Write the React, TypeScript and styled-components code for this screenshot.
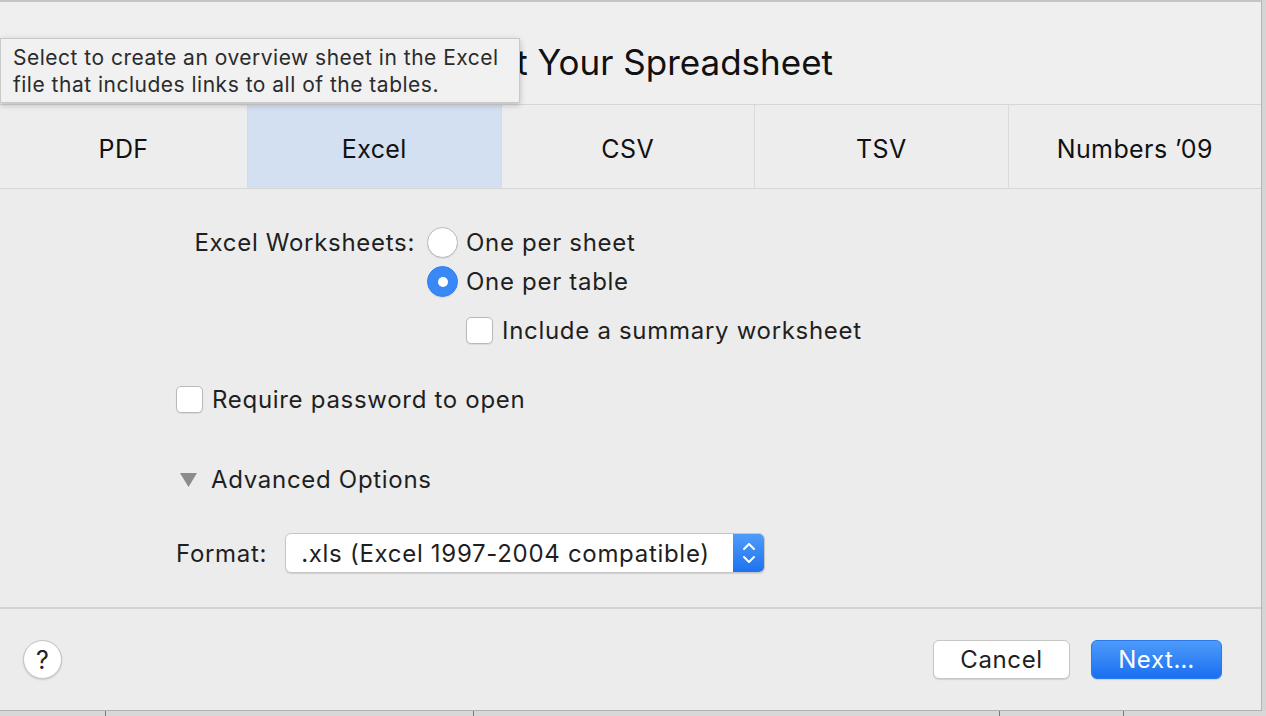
import React from "react";
import styled, { createGlobalStyle } from "styled-components";

const GlobalStyle = createGlobalStyle`
    html, body {
        margin: 0;
        padding: 0;
        background: #d5d5d5;
        font-family: Inter, "Liberation Sans", Arial, sans-serif;
        color: #1f1f1f;
        overflow: hidden;
    }
`;

const Page = styled.div`
    width: 1266px;
    height: 716px;
    display: flex;
    flex-direction: column;
    position: relative;
`;

const Sheet = styled.div`
    width: 1261px;
    height: 708px;
    background: #ececec;
    border-top: 2px solid #c4c4c4;
    border-right: 1px solid #b4b4b4;
    border-bottom: 1px solid #b0b0b0;
    display: flex;
    flex-direction: column;
`;

const TitleBar = styled.div`
    height: 102px;
    box-sizing: border-box;
    padding: 40px 8px 0 0;
    background: #efefef;
    text-align: center;
    font-size: 35px;
    line-height: 40px;
    color: #111;
`;

const TabBar = styled.div`
    display: flex;
    height: 83px;
    border-top: 1px solid #d6d6d6;
    border-bottom: 1px solid #d6d6d6;
`;

const Tab = styled.div<{ $active?: boolean }>`
    flex: 1;
    display: flex;
    align-items: center;
    justify-content: center;
    padding-top: 5px;
    font-size: 25px;
    letter-spacing: 0.4px;
    color: #111;
    background: ${(p) => (p.$active ? "#d3e0f1" : "#ededed")};
    &:first-child {
        flex: 0 0 247px;
    }
    & + & {
        border-left: 1px solid #dadada;
    }
`;

const Content = styled.div`
    flex: 1;
    padding: 34px 0 0 176px;
    display: flex;
    flex-direction: column;
    align-items: flex-start;
    font-size: 24px;
    letter-spacing: 0.7px;
`;

const FieldRow = styled.div`
    display: flex;
    align-items: flex-start;
`;

const FieldLabel = styled.div`
    width: 240px;
    padding-right: 12px;
    text-align: right;
    height: 39px;
    line-height: 39px;
    margin-left: -1px;
`;

const Options = styled.div`
    display: flex;
    flex-direction: column;
`;

const Option = styled.label<{ $indent?: number; $top?: number }>`
    display: flex;
    align-items: center;
    gap: 8px;
    height: 39px;
    margin-left: ${(p) => p.$indent || 0}px;
    margin-top: ${(p) => p.$top || 0}px;
    white-space: nowrap;
`;

const Radio = styled.span<{ $checked?: boolean }>`
    width: 31px;
    height: 31px;
    box-sizing: border-box;
    border-radius: 50%;
    display: flex;
    align-items: center;
    justify-content: center;
    background: ${(p) => (p.$checked ? "#3a88f6" : "#fff")};
    border: 1px solid ${(p) => (p.$checked ? "#2f7ff0" : "#b9b9b9")};
    box-shadow: 0 1px 1px rgba(0, 0, 0, 0.08);
    &::after {
        content: "";
        display: ${(p) => (p.$checked ? "block" : "none")};
        width: 10px;
        height: 10px;
        border-radius: 50%;
        background: #fff;
    }
`;

const Checkbox = styled.span`
    width: 27px;
    height: 27px;
    box-sizing: border-box;
    border-radius: 5px;
    background: #fff;
    border: 1px solid #b9b9b9;
    box-shadow: 0 1px 1px rgba(0, 0, 0, 0.08);
    margin-right: 1px;
`;

const Disclosure = styled.div`
    display: flex;
    align-items: center;
    gap: 14px;
    height: 39px;
    margin-top: 41px;
    padding-left: 4px;
    svg {
        display: block;
    }
`;

const FormatRow = styled.div`
    display: flex;
    align-items: center;
    gap: 18px;
    margin-top: 34px;
`;

const Popup = styled.div`
    width: 480px;
    height: 40px;
    box-sizing: border-box;
    display: flex;
    align-items: stretch;
    background: #fff;
    border: 1px solid #c6c6c6;
    border-radius: 6px;
    box-shadow: 0 1px 1px rgba(0, 0, 0, 0.12);
    overflow: hidden;
`;

const PopupText = styled.div`
    flex: 1;
    display: flex;
    align-items: center;
    padding-left: 15px;
    white-space: nowrap;
`;

const Stepper = styled.div`
    width: 31px;
    display: flex;
    align-items: center;
    justify-content: center;
    background: linear-gradient(#4f9cfa, #1e72ef);
`;

const Footer = styled.div`
    height: 101px;
    border-top: 2px solid #d3d3d3;
    display: flex;
    align-items: center;
    padding: 0 39px 0 23px;
`;

const HelpButton = styled.div`
    width: 39px;
    height: 39px;
    box-sizing: border-box;
    border-radius: 50%;
    background: #fff;
    border: 1px solid #c2c2c2;
    box-shadow: 0 1px 2px rgba(0, 0, 0, 0.15);
    display: flex;
    align-items: center;
    justify-content: center;
    font-size: 25px;
    color: #222;
`;

const Spacer = styled.div`
    flex: 1;
`;

const Button = styled.div<{ $primary?: boolean; $width: number }>`
    width: ${(p) => p.$width}px;
    height: 39px;
    box-sizing: border-box;
    border-radius: 6px;
    display: flex;
    align-items: center;
    justify-content: center;
    font-size: 24px;
    letter-spacing: 0.6px;
    color: ${(p) => (p.$primary ? "#fff" : "#1f1f1f")};
    background: ${(p) => (p.$primary ? "linear-gradient(#4e9bfb, #1a6ff0)" : "#fff")};
    border: 1px solid ${(p) => (p.$primary ? "#2a79ef" : "#c6c6c6")};
    box-shadow: 0 1px 1px rgba(0, 0, 0, 0.12);
    & + & {
        margin-left: 21px;
    }
`;

const BehindStrip = styled.div`
    flex: 1;
    display: flex;
    background: #d8d8d8;
`;

const BehindCell = styled.div<{ $w: number }>`
    width: ${(p) => p.$w}px;
    border-right: 1px solid #7a7a7a;
`;

const Tooltip = styled.div`
    position: absolute;
    left: 0;
    top: 38px;
    width: 520px;
    height: 65px;
    box-sizing: border-box;
    padding: 5px 0 0 12px;
    background: #f1f1f1;
    border: 1px solid #c9c9c9;
    box-shadow: 0 2px 6px rgba(0, 0, 0, 0.22);
    font-size: 21px;
    letter-spacing: 0.5px;
    line-height: 27px;
    color: #2b2b2b;
    white-space: nowrap;
`;

const tabs = ["PDF", "Excel", "CSV", "TSV", "Numbers ’09"];

export default function App() {
    return (
        <Page>
            <GlobalStyle />
            <Sheet>
                <TitleBar>Export Your Spreadsheet</TitleBar>
                <TabBar>
                    {tabs.map((t) => (
                        <Tab key={t} $active={t === "Excel"}>
                            {t}
                        </Tab>
                    ))}
                </TabBar>
                <Content>
                    <FieldRow>
                        <FieldLabel>Excel Worksheets:</FieldLabel>
                        <Options>
                            <Option>
                                <Radio />
                                One per sheet
                            </Option>
                            <Option>
                                <Radio $checked />
                                One per table
                            </Option>
                            <Option $indent={39} $top={10}>
                                <Checkbox />
                                Include a summary worksheet
                            </Option>
                        </Options>
                    </FieldRow>
                    <Option $top={30}>
                        <Checkbox />
                        Require password to open
                    </Option>
                    <Disclosure>
                        <svg width="17" height="14" viewBox="0 0 17 14">
                            <path d="M0 0 H17 L8.5 14 Z" fill="#8c8c8c" />
                        </svg>
                        Advanced Options
                    </Disclosure>
                    <FormatRow>
                        Format:
                        <Popup>
                            <PopupText>.xls (Excel 1997-2004 compatible)</PopupText>
                            <Stepper>
                                <svg width="14" height="26" viewBox="0 0 14 26">
                                    <path
                                        d="M2 9 L7 4 L12 9 M2 17 L7 22 L12 17"
                                        fill="none"
                                        stroke="#fff"
                                        strokeWidth="2"
                                        strokeLinecap="round"
                                        strokeLinejoin="round"
                                    />
                                </svg>
                            </Stepper>
                        </Popup>
                    </FormatRow>
                </Content>
                <Footer>
                    <HelpButton>?</HelpButton>
                    <Spacer />
                    <Button $width={137}>Cancel</Button>
                    <Button $width={131} $primary>
                        Next…
                    </Button>
                </Footer>
            </Sheet>
            <BehindStrip>
                <BehindCell $w={105} />
                <BehindCell $w={367} />
                <BehindCell $w={525} />
                <BehindCell $w={123} />
            </BehindStrip>
            <Tooltip>
                Select to create an overview sheet in the Excel
                <br />
                file that includes links to all of the tables.
            </Tooltip>
        </Page>
    );
}
